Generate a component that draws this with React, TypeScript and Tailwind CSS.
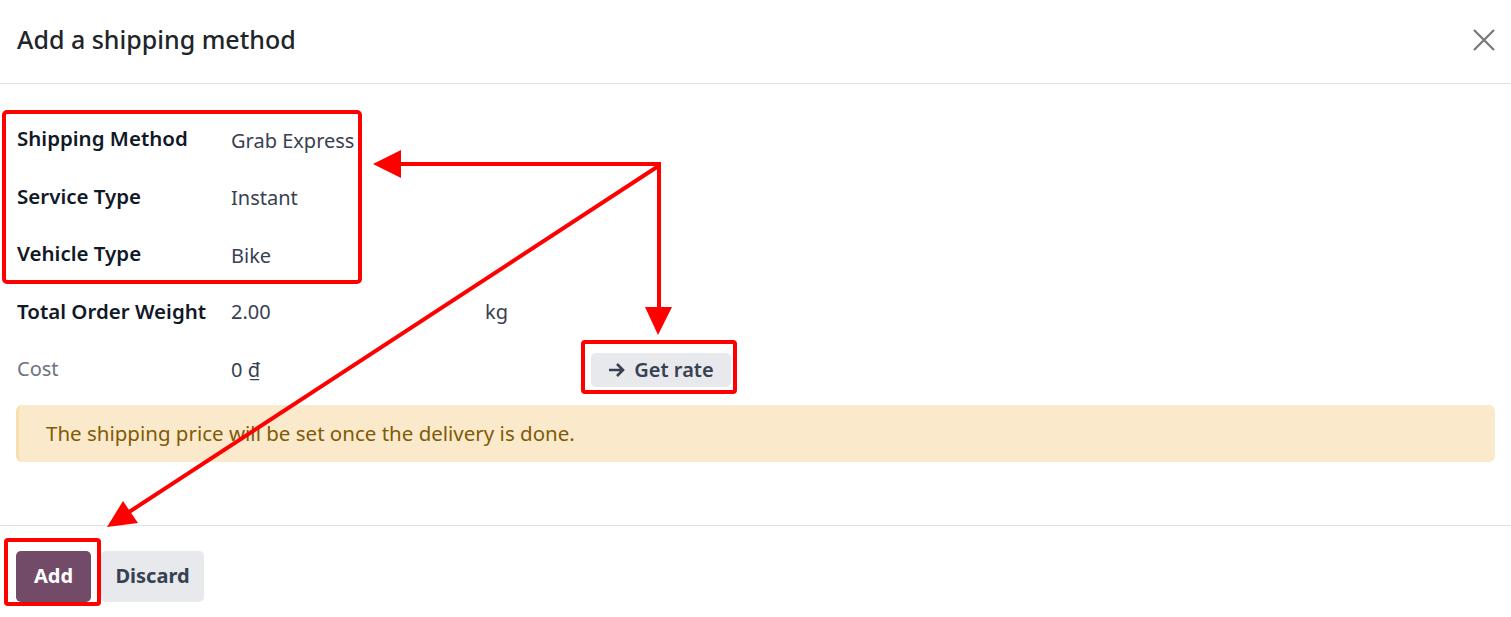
import React from "react";

const fields = [
  { label: "Shipping Method", value: "Grab Express" },
  { label: "Service Type", value: "Instant" },
  { label: "Vehicle Type", value: "Bike" },
];

function Annotations() {
  return (
    <svg
      className="pointer-events-none absolute left-0 top-0"
      width={1511}
      height={617}
      viewBox="0 0 1511 617"
    >
      <g fill="none" stroke="#ff0000" strokeWidth={4}>
        <rect x={4} y={112} width={356} height={170} rx={3} />
        <rect x={583} y={342} width={152} height={50} rx={2} />
        <rect x={6} y={540} width={93} height={64} rx={2} />
        <line x1={661} y1={164} x2={396} y2={164} />
        <line x1={659} y1={162} x2={659} y2={312} />
        <line x1={660} y1={165} x2={126} y2={514} />
      </g>
      <g fill="#ff0000">
        <polygon points="373,164 401,150 401,178" />
        <polygon points="658,335 645,307 672,307" />
        <polygon points="107,527 123,501 138,523" />
      </g>
    </svg>
  );
}

export default function App() {
  return (
    <div
      className="relative h-[617px] w-[1511px] overflow-hidden bg-white text-[#374151]"
      style={{ fontFamily: '"Noto Sans", "Open Sans", sans-serif' }}
    >
      {/* Header */}
      <div className="flex h-[84px] items-center justify-between border-b border-[#dee2e6] pb-[4px] pl-[17px] pr-[15px]">
        <h4 className="text-[25px] font-medium text-[#212529]">Add a shipping method</h4>
        <button className="flex h-[24px] w-[24px] items-center justify-center">
          <svg width="24" height="24" viewBox="0 0 24 24">
            <path d="M2 2 L22 22 M22 2 L2 22" stroke="#777" strokeWidth="2.2" fill="none" />
          </svg>
        </button>
      </div>

      {/* Body */}
      <div className="pt-[26px]">
        <div className="grid grid-cols-[214px_254px_1fr] pl-[17px] text-[20px]">
          {fields.map((f) => (
            <React.Fragment key={f.label}>
              <div className="flex h-[57.5px] items-center text-[20.5px] font-semibold text-[#111827]">{f.label}</div>
              <div className="col-span-2 flex h-[57.5px] items-center pt-[4px]">{f.value}</div>
            </React.Fragment>
          ))}

          <div className="flex h-[57.5px] items-center text-[20.5px] font-semibold text-[#111827]">Total Order Weight</div>
          <div className="flex h-[57.5px] items-center pt-[2px]">2.00</div>
          <div className="flex h-[57.5px] items-center pt-[2px]">kg</div>

          <div className="flex h-[57.5px] items-center text-[#6b7280]">Cost</div>
          <div className="flex h-[57.5px] items-center pt-[2px]">0 ₫</div>
          <div className="flex h-[57.5px] items-center pl-[106px] pt-[2px]">
            <button className="flex h-[34px] w-[140px] items-center justify-center gap-[8px] rounded-[5px] bg-[#e7e9ed] text-[20px] font-semibold text-[#374151]">
              <svg width="18" height="16" viewBox="0 0 18 16">
                <path d="M1 8 H15 M9 2 L15 8 L9 14" stroke="#374151" strokeWidth="2.6" fill="none" />
              </svg>
              Get rate
            </button>
          </div>
        </div>

        <div className="mx-[16px] mt-[7px] flex h-[57px] items-center rounded-[6px] border-l-[3px] border-[#f8dfae] bg-[#fbe9cb] pl-[27px] text-[20.5px] text-[#7f5b07]">
          The shipping price will be set once the delivery is done.
        </div>
      </div>

      {/* Footer */}
      <div className="mt-[63px] flex gap-[10px] border-t border-[#dee2e6] pl-[16px] pt-[25px]">
        <button className="h-[51px] w-[75px] rounded-[5px] bg-[#714b67] text-[20px] font-bold text-white">
          Add
        </button>
        <button className="h-[51px] w-[103px] rounded-[5px] bg-[#e7e9ed] text-[20px] font-bold text-[#374151]">
          Discard
        </button>
      </div>

      <Annotations />
    </div>
  );
}
